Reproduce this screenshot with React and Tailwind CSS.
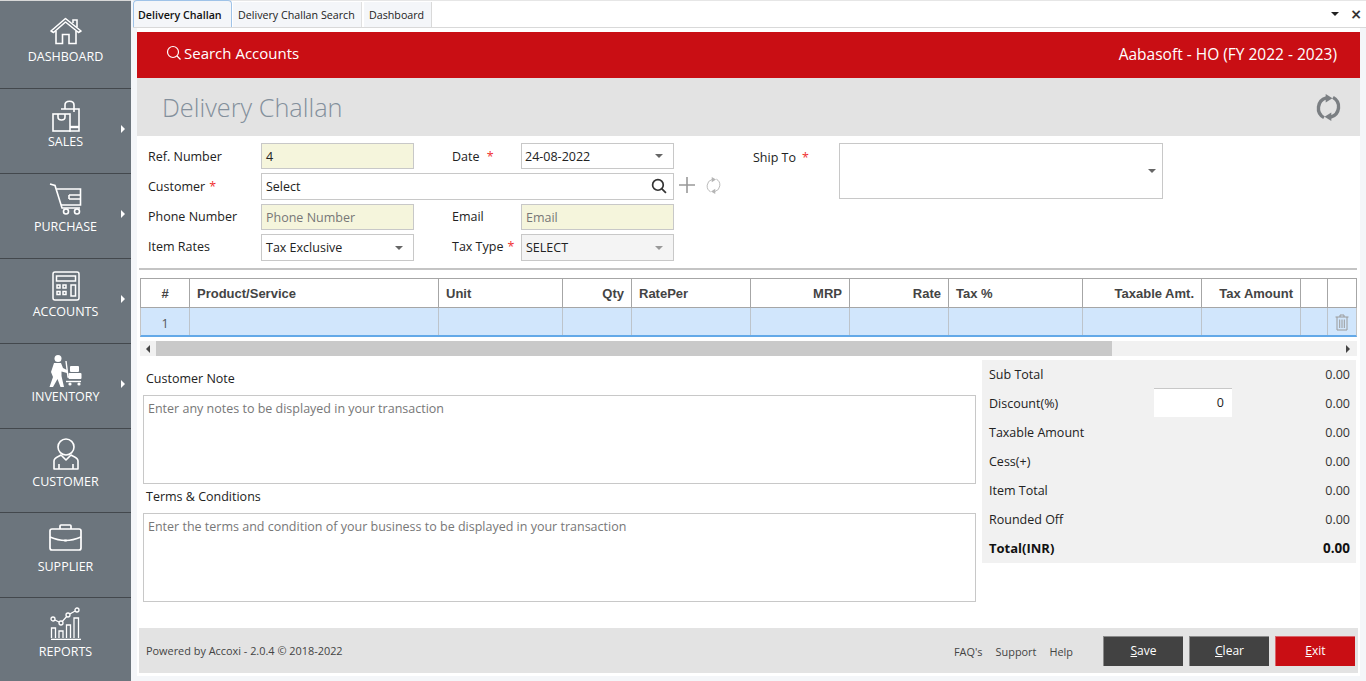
import React from 'react';

const HomeIcon = () => (
  <svg width="32" height="28" viewBox="0 0 32 28" fill="none" stroke="white" strokeWidth="1.6">
    <path d="M1 14 L15.5 1.5 L31 14 L28.5 15.5 L15.5 5 L3.5 15.5 Z" strokeLinejoin="round" />
    <path d="M23 6 V3 H27 V10" />
    <path d="M6 14 V26.5 H12.5 V17.5 H19 V26.5 H26 V14" />
  </svg>
);

const SalesIcon = () => (
  <svg width="28" height="32" viewBox="0 0 28 32" fill="none" stroke="white" strokeWidth="1.6">
    <path d="M9 9 H27 V31 H17" />
    <path d="M13 9 V5 C13 0 22 0 22 5 V12" />
    <rect x="1" y="14" width="17" height="17" />
    <path d="M6 14 V17 C6 21 13 21 13 17 V14" />
    <path d="M18 27 H27" strokeWidth="2.4" />
  </svg>
);

const CartIcon = () => (
  <svg width="33" height="32" viewBox="0 0 33 32" fill="none" stroke="white" strokeWidth="1.6">
    <path d="M1 1 L6 2.5 L13 25 H31" />
    <path d="M7.5 6 H31.5 V22 H12" />
    <path d="M20 12 H31.5 M20 16 H31.5" />
    <path d="M20 12 V16" />
    <circle cx="17" cy="28.5" r="2.5" />
    <circle cx="28" cy="28.5" r="2.5" />
  </svg>
);

const CalcIcon = () => (
  <svg width="28" height="30" viewBox="0 0 28 30" fill="none" stroke="white" strokeWidth="1.5">
    <rect x="1" y="1" width="26" height="28" rx="2" />
    <rect x="4.5" y="5" width="19" height="5" />
    <path d="M5 14 h3 v3 h-3 z M11 14 h3 v3 h-3 z M5 20.5 h3 v3 h-3 z M11 20.5 h3 v3 h-3 z" />
    <rect x="19" y="14" width="4.5" height="11" />
  </svg>
);

const InventoryIcon = () => (
  <svg width="33" height="33" viewBox="0 0 33 33" fill="white">
    <circle cx="9" cy="3.5" r="3.5" />
    <path d="M5 8 H12 L14 13 L18 15 V18 L12.5 16.5 V21 L15 32 H11.5 L8.5 24 L4 32 H0.5 L4 22 L2 17 Z" />
    <path d="M17 6 L19 22 H32" fill="none" stroke="white" strokeWidth="1.4" />
    <rect x="21" y="11" width="9" height="6" rx="1" />
    <rect x="19.5" y="18" width="13" height="6" rx="1" />
    <circle cx="21" cy="29" r="1.6" />
    <circle cx="30" cy="29" r="1.6" />
    <path d="M17 26.5 H32" stroke="white" strokeWidth="1.4" />
  </svg>
);

const CustomerIcon = () => (
  <svg width="26" height="32" viewBox="0 0 26 32" fill="none" stroke="white" strokeWidth="1.6">
    <circle cx="13" cy="9" r="8" />
    <path d="M1 31 V23 C1 19 6 18.5 8 17 L13 22 L18 17 C20 18.5 25 19 25 23 V31 Z" strokeLinejoin="round" />
    <path d="M6 31 V26 M20 31 V26" />
  </svg>
);

const CaseIcon = () => (
  <svg width="33" height="27" viewBox="0 0 33 27" fill="none" stroke="white" strokeWidth="1.7">
    <rect x="1" y="5" width="31" height="21" rx="2" />
    <path d="M11 5 V2 C11 1.4 11.4 1 12 1 H21 C21.6 1 22 1.4 22 2 V5" />
    <path d="M1 13 C8 16 12 16.5 16.5 16.5 C21 16.5 25 16 32 13" />
    <path d="M16.5 15.5 v2" strokeWidth="2.4" />
  </svg>
);

const ReportsIcon = () => (
  <svg width="32" height="33" viewBox="0 0 32 33" fill="none" stroke="white" strokeWidth="1.3">
    <path d="M3 12 L11 16 L18 8 L27 3" />
    <circle cx="3" cy="12" r="2" fill="#6c757d" />
    <circle cx="11" cy="16" r="2" fill="#6c757d" />
    <circle cx="18" cy="8" r="2" fill="#6c757d" />
    <circle cx="27" cy="3" r="2" fill="#6c757d" />
    <path d="M1 32.5 H31" strokeWidth="1.6" />
    <path d="M1.5 31 V21 H5.5 V31 M9 31 V24 H13 V31 M16.5 31 V18 H20.5 V31 M24 31 V11 H28.5 V31" />
  </svg>
);

const RefreshIcon = ({ size, color, weight }) => (
  <svg width={size} height={size} viewBox="0 0 24 24" fill="none" stroke={color} strokeWidth={weight}>
    <path d="M8 21 A9.5 9.5 0 0 1 10 3.5" />
    <path d="M16 3 A9.5 9.5 0 0 1 14 20.5" />
    <path d="M9.5 0 L15.5 3.7 L9.5 7.5 Z" fill={color} stroke="none" />
    <path d="M14.5 16.5 L8.5 20.3 L14.5 24 Z" fill={color} stroke="none" />
  </svg>
);

const menuItems = [
  { label: 'DASHBOARD', icon: <HomeIcon />, box: 'h-[88px] pt-[11px]', gap: 'mt-[3px]' },
  { label: 'SALES', icon: <SalesIcon />, arrow: true, box: 'h-[85px] pt-[10px]', gap: 'mt-[1px]' },
  { label: 'PURCHASE', icon: <CartIcon />, arrow: true, box: 'h-[85px] pt-[8px]', gap: 'mt-[3px]' },
  { label: 'ACCOUNTS', icon: <CalcIcon />, arrow: true, box: 'h-[85px] pt-[9px]', gap: 'mt-[2px]' },
  { label: 'INVENTORY', icon: <InventoryIcon />, arrow: true, box: 'h-[85px] pt-[11px]', gap: 'mt-0' },
  { label: 'CUSTOMER', icon: <CustomerIcon />, box: 'h-[84px] pt-[8px]', gap: 'mt-[3px]' },
  { label: 'SUPPLIER', icon: <CaseIcon />, box: 'h-[85px] pt-[5px]', gap: 'mt-[7px]' },
  { label: 'REPORTS', icon: <ReportsIcon />, box: 'h-[84px] pt-[9px]', gap: 'mt-[3px]' },
];

const columns = [
  { title: '#', w: 'w-[49px]', cls: 'text-center' },
  { title: 'Product/Service', w: 'w-[249px]', cls: 'text-left pl-[7px]' },
  { title: 'Unit', w: 'w-[124px]', cls: 'text-left pl-[7px]' },
  { title: 'Qty', w: 'w-[69px]', cls: 'text-right pr-[7px]' },
  { title: 'RatePer', w: 'w-[119px]', cls: 'text-left pl-[7px]' },
  { title: 'MRP', w: 'w-[99px]', cls: 'text-right pr-[7px]' },
  { title: 'Rate', w: 'w-[99px]', cls: 'text-right pr-[7px]' },
  { title: 'Tax %', w: 'w-[134px]', cls: 'text-left pl-[7px]' },
  { title: 'Taxable Amt.', w: 'w-[119px]', cls: 'text-right pr-[7px]' },
  { title: 'Tax Amount', w: 'w-[99px]', cls: 'text-right pr-[7px]' },
  { title: '', w: 'w-[27px]', cls: '' },
  { title: '', w: 'w-[30px]', cls: '' },
];

const totals = [
  ['Sub Total', '0.00'],
  ['Discount(%)', '0.00'],
  ['Taxable Amount', '0.00'],
  ['Cess(+)', '0.00'],
  ['Item Total', '0.00'],
  ['Rounded Off', '0.00'],
];

const Caret = ({ color = 'border-t-[#666]' }) => (
  <span className={`w-0 h-0 border-x-[4px] border-x-transparent border-t-[4px] ${color}`} />
);

const Star = () => <span className="text-[#f03030] ml-1">*</span>;

const App = () => {
  return (
    <div className="w-[1366px] h-[681px] flex overflow-hidden bg-[#f4f6f9] text-[12.5px] text-[#222] font-['Open_Sans','Noto_Sans',sans-serif]">
      <aside className="w-[131px] h-full shrink-0 bg-[#6c757d] border-t border-[#d8d8d8]">
        {menuItems.map((item) => (
          <div key={item.label} className={`relative border-b border-[#43484d] flex flex-col items-center text-white ${item.box}`}>
            <div className="h-[33px] flex items-end justify-center">{item.icon}</div>
            <span className={`text-[12.5px] leading-[17px] ${item.gap}`}>{item.label}</span>
            {item.arrow && (
              <span className="absolute right-[6px] top-[36px] w-0 h-0 border-y-[4px] border-y-transparent border-l-[4px] border-l-white" />
            )}
          </div>
        ))}
      </aside>

      <main className="flex-1 ml-[2px] flex flex-col min-w-0 bg-white">
        <div className="h-[28px] flex items-end border-b border-[#d9d9d9] border-t border-t-[#e6e6e6] bg-white shrink-0 text-[10.7px]">
          <div className="h-[27px] w-[99px] flex items-center pl-[4px] pt-[2px] font-semibold text-[#111] bg-[#f4f6f9] border border-[#9fc3e8] border-b-0 rounded-t-sm">Delivery Challan</div>
          <div className="h-[25px] w-[129px] ml-[1px] flex items-center pl-[5px] pt-[1px] bg-[#f4f6f9] border-r border-[#e0e0e0]">Delivery Challan Search</div>
          <div className="h-[25px] w-[68px] ml-[2px] flex items-center pl-[5px] pt-[1px] bg-[#f4f6f9] border-r border-[#d9d9d9]">Dashboard</div>
          <div className="flex-1 h-full flex items-center justify-end pr-[4px] gap-[11px]">
            <Caret color="border-t-[#222]" />
            <span className="text-[14px] leading-none font-bold text-[#333] font-['DejaVu_Sans',sans-serif]">×</span>
          </div>
        </div>

        <div className="flex-1 flex min-h-0">
          <div className="w-[4px] bg-[#f4f6f9] shrink-0" />
          <div className="flex-1 flex flex-col min-w-0">
            <div className="h-[4px] shrink-0 bg-white" />
            <div className="h-[46px] shrink-0 bg-[#c90e14] text-white flex items-center justify-between pl-[29px] pr-[23px] pb-[2px]">
              <div className="flex items-center text-[15px] pb-[2px]">
                <svg width="16" height="16" viewBox="0 0 16 16" fill="none" stroke="white" strokeWidth="1.2" className="mr-[2px]">
                  <circle cx="7" cy="7" r="5.5" />
                  <path d="M11 11 L14.5 14.5" />
                </svg>
                <span>Search Accounts</span>
              </div>
              <span className="text-[15.5px] pt-[2px]">Aabasoft - HO (FY 2022 - 2023)</span>
            </div>

            <div className="h-[58px] shrink-0 bg-[#e3e3e3] flex items-center justify-between pl-[25px] pr-[18px]">
              <h1 className="text-[25.3px] font-light text-[#84909c] leading-none pt-[2px]">Delivery Challan</h1>
              <RefreshIcon size={27} color="#7b7f83" weight={3} />
            </div>

            <div className="h-[132px] shrink-0 flex pl-[11px] pt-[7px] relative">
              <div className="w-[605px] shrink-0 flex flex-col">
                <div className="flex h-[26px] items-center">
                  <label className="w-[113px] shrink-0 pt-[3px]">Ref. Number</label>
                  <div className="w-[153px] h-[26px] bg-[#f5f5dc] border border-[#c8c8c8] px-[4px] pt-[3px] flex items-center">4</div>
                  <label className="w-[69px] ml-[38px] pt-[3px]">Date <Star /></label>
                  <div className="w-[153px] h-[26px] border border-[#c8c8c8] pl-[3px] pr-[10px] flex items-center justify-between">
                    <span className="pt-[3px]">24-08-2022</span>
                    <Caret />
                  </div>
                </div>
                <div className="flex h-[27px] items-center mt-[4px]">
                  <label className="w-[113px] shrink-0 pt-[2px]">Customer<Star /></label>
                  <div className="w-[413px] h-[27px] shrink-0 border border-[#c8c8c8] pl-[4px] pr-[6px] flex items-center justify-between">
                    <span className="pt-[2px]">Select</span>
                    <svg width="16" height="16" viewBox="0 0 15 15" fill="none" stroke="#333" strokeWidth="1.6" className="-mt-[2px]">
                      <circle cx="6.5" cy="6.5" r="5" />
                      <path d="M10 10 L14 14" />
                    </svg>
                  </div>
                  <svg width="16" height="16" viewBox="0 0 16 16" stroke="#999" strokeWidth="1.6" className="ml-[5px] shrink-0 -mt-[3px]">
                    <path d="M8 0 V16 M0 8 H16" />
                  </svg>
                  <span className="ml-[10px] shrink-0 -mt-[3px]"><RefreshIcon size={17} color="#b5b5b5" weight={1.3} /></span>
                </div>
                <div className="flex h-[26px] items-center mt-[4px]">
                  <label className="w-[113px] shrink-0 pt-[1px]">Phone Number</label>
                  <div className="w-[153px] h-[26px] bg-[#f5f5dc] border border-[#c8c8c8] px-[4px] pt-[3px] flex items-center text-[#777]">Phone Number</div>
                  <label className="w-[69px] ml-[38px] pt-[1px]">Email</label>
                  <div className="w-[153px] h-[26px] bg-[#f5f5dc] border border-[#c8c8c8] px-[4px] pt-[3px] flex items-center text-[#777]">Email</div>
                </div>
                <div className="flex h-[27px] items-center mt-[4px]">
                  <label className="w-[113px] shrink-0">Item Rates</label>
                  <div className="w-[153px] h-[27px] border border-[#c8c8c8] pl-[4px] pr-[10px] flex items-center justify-between">
                    <span className="pt-[2px]">Tax Exclusive</span>
                    <Caret />
                  </div>
                  <label className="w-[69px] ml-[38px]">Tax Type<Star /></label>
                  <div className="w-[153px] h-[27px] bg-[#f4f4f4] border border-[#c8c8c8] pl-[4px] pr-[10px] flex items-center justify-between">
                    <span className="pt-[2px]">SELECT</span>
                    <Caret color="border-t-[#999]" />
                  </div>
                </div>
              </div>
              <label className="w-[86px] h-[26px] mt-[2px] flex items-center">Ship To <span className="ml-[2px]"><Star /></span></label>
              <div className="w-[324px] h-[56px] border border-[#c8c8c8] flex items-center justify-end pr-[6px]">
                <Caret />
              </div>
            </div>

            <div className="h-[2px] bg-[#c4c4c4] ml-[2px] mr-[3px] shrink-0" />

            <div className="mt-[8px] ml-[3px] w-[1217px] shrink-0">
              <div className="flex h-[30px] border border-[#a6a6a6] bg-white font-['Liberation_Sans',sans-serif] font-bold text-[13px] text-[#444]">
                {columns.map((col, i) => (
                  <div key={i} className={`${col.w} ${col.cls} h-full leading-[30px] border-r border-[#a6a6a6] last:border-r-0 shrink-0`}>{col.title}</div>
                ))}
              </div>
              <div className="flex h-[29px] bg-[#d1e6fc] border-x border-x-[#c4c4c4] border-b-2 border-b-[#63a9e8]">
                {columns.map((col, i) => (
                  <div key={i} className={`${col.w} h-full border-r border-[#bdc4cb] last:border-r-0 shrink-0 flex items-center justify-center text-[#555]`}>
                    {i === 0 && <span className="pt-[6px]">1</span>}
                    {i === 11 && (
                      <svg width="14" height="17" viewBox="0 0 14 17" fill="none" stroke="#9a9a9a" strokeWidth="1" className="mt-[2px] mr-[2px]">
                        <path d="M0.5 3 H13.5 M5 3 V1 H9 V3 M2 3 V16 H12 V3 M4.7 5.5 V14 M7 5.5 V14 M9.3 5.5 V14" />
                      </svg>
                    )}
                  </div>
                ))}
              </div>
              <div className="mt-[4px] h-[15px] bg-[#f1f1f1] flex items-center">
                <div className="w-[16px] h-full flex items-center justify-center">
                  <span className="w-0 h-0 border-y-[4px] border-y-transparent border-r-[4px] border-r-[#444]" />
                </div>
                <div className="w-[956px] h-full bg-[#c9c9c9]" />
                <div className="flex-1 h-full flex items-center justify-end pr-[7px]">
                  <span className="w-0 h-0 border-y-[4px] border-y-transparent border-l-[4px] border-l-[#444]" />
                </div>
              </div>
            </div>

            <div className="flex mt-[4px] shrink-0 h-[242px]">
              <div className="w-[833px] ml-[6px] shrink-0 flex flex-col">
                <label className="pl-[3px] h-[17px] mt-[10px] leading-[17px]">Customer Note</label>
                <div className="mt-[8px] h-[89px] border border-[#c8c8c8] px-[4px] py-[5px] text-[#777] leading-[16px]">Enter any notes to be displayed in your transaction</div>
                <label className="pl-[3px] h-[17px] mt-[4px] leading-[17px]">Terms &amp; Conditions</label>
                <div className="mt-[8px] h-[89px] border border-[#c8c8c8] px-[4px] py-[5px] text-[#777] leading-[16px]">Enter the terms and condition of your business to be displayed in your transaction</div>
              </div>
              <div className="w-[374px] ml-[6px] h-[203px] bg-[#f1f1f1] pl-[7px] pr-[6px] flex flex-col">
                {totals.map(([name, value]) => (
                  <div key={name} className="h-[29px] flex items-center shrink-0">
                    <span className="w-[165px] shrink-0 pt-[2px]">{name}</span>
                    {name === 'Discount(%)' && (
                      <div className="w-[78px] h-[29px] shrink-0 -mt-[2px] bg-white border-t border-[#c8c8c8] text-right pr-[8px] leading-[28px]">0</div>
                    )}
                    <span className="flex-1 text-right text-[#333] pt-[2px]">{value}</span>
                  </div>
                ))}
                <div className="h-[29px] flex items-center justify-between font-bold text-[#111] text-[13px] shrink-0">
                  <span>Total(INR)</span>
                  <span className="text-[13.5px]">0.00</span>
                </div>
              </div>
            </div>

            <div className="h-[45px] mt-[26px] ml-[2px] mr-[2px] shrink-0 bg-[#e3e3e3] flex items-center pl-[7px] pr-[3px] text-[#444] text-[10.9px]">
              <span className="pt-[2px]">Powered by Accoxi - 2.0.4 © 2018-2022</span>
              <div className="ml-auto flex gap-[13px] mr-[30px] mt-[4px]">
                <span>FAQ's</span>
                <span>Support</span>
                <span>Help</span>
              </div>
              <div className="flex gap-[6px] text-[12px] text-white font-medium">
                <button className="w-[80px] h-[30px] bg-[#424242] border-t border-l border-[#8a8a8a]"><u>S</u>ave</button>
                <button className="w-[80px] h-[30px] bg-[#424242] border-t border-l border-[#8a8a8a]"><u>C</u>lear</button>
                <button className="w-[80px] h-[30px] bg-[#c90e14] border-t border-l border-[#d9646a]"><u>E</u>xit</button>
              </div>
            </div>
            <div className="h-[3px] bg-white shrink-0" />
            <div className="flex-1 bg-[#f4f6f9]" />
          </div>
          <div className="w-[6px] bg-[#f4f6f9] shrink-0" />
        </div>
      </main>
    </div>
  );
};

export default App;
